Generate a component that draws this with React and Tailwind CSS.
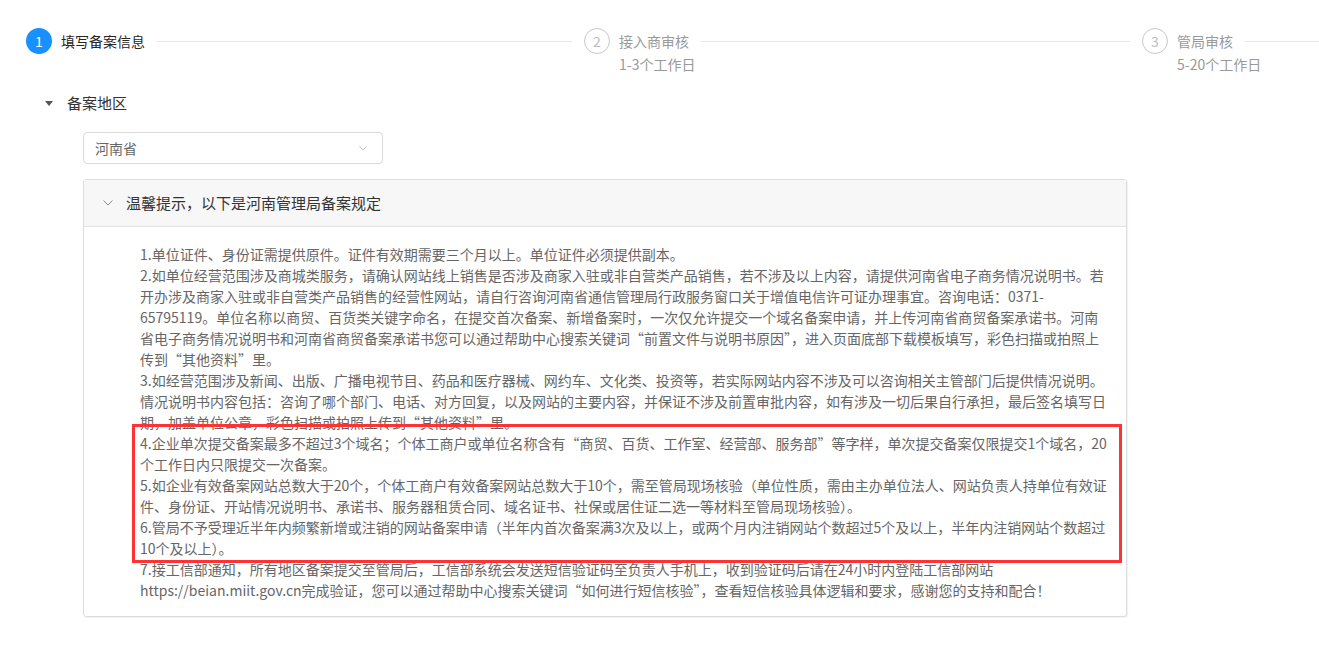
import React from "react";

const font = { fontFamily: '"Noto Sans CJK SC", "Noto Sans", sans-serif' };

function Step({ num, title, desc, active }) {
  return (
    <div className="w-[558px] shrink-0 flex items-start pr-3">
      <div
        className={
          active
            ? "w-[26px] h-[26px] rounded-full bg-[#1890ff] text-white text-[14px] flex items-center justify-center shrink-0"
            : "w-[26px] h-[26px] rounded-full border border-[#c8c8c8] text-[#bbbbbb] text-[14px] flex items-center justify-center shrink-0"
        }
      >
        {num}
      </div>
      <div className="ml-[9px] flex-1 min-w-0">
        <div className="flex items-center h-[26px]">
          <span className={active ? "text-[14px] text-[#262626] whitespace-nowrap" : "text-[14px] text-[#999999] whitespace-nowrap"}>
            {title}
          </span>
          <div className="flex-1 h-px bg-[#e6e6e6] ml-3" />
        </div>
        {desc && <div className="text-[14px] text-[#999999] leading-[20px] mt-0">{desc}</div>}
      </div>
    </div>
  );
}

export default function App() {
  return (
    <div className="w-full overflow-hidden bg-white min-h-[651px]" style={font}>
      <div className="flex pl-[26px] pt-[28px]">
        <Step num="1" title="填写备案信息" active />
        <Step num="2" title="接入商审核" desc="1-3个工作日" />
        <Step num="3" title="管局审核" desc="5-20个工作日" />
      </div>

      <div className="flex items-center mt-[18px] h-[22px] pl-[45px]">
        <div className="w-0 h-0 border-l-[4px] border-r-[4px] border-t-[5px] border-l-transparent border-r-transparent border-t-[#555]" />
        <span className="ml-[14px] text-[15px] text-[#333333]">备案地区</span>
      </div>

      <div className="ml-[83px] mt-[18px] w-[300px] h-[32px] border border-[#d9d9d9] rounded-[4px] flex items-center justify-between pl-[11px] pr-[15px]">
        <span className="text-[14px] text-[#666666]">河南省</span>
        <svg width="8" height="5" viewBox="0 0 8 5" fill="none">
          <path d="M0.4 0.4 L4 4.2 L7.6 0.4" stroke="#c0c0c0" strokeWidth="1" />
        </svg>
      </div>

      <div className="ml-[83px] mt-[15px] w-[1044px] border border-[#dddddd] rounded-[3px] shadow-[1px_1px_1px_rgba(0,0,0,0.06)]">
        <div className="h-[47px] bg-[#f7f7f7] border-b border-[#e3e3e3] flex items-center pl-[19px]">
          <svg width="10" height="6" viewBox="0 0 10 6" fill="none">
            <path d="M0.5 0.5 L5 5 L9.5 0.5" stroke="#888" strokeWidth="1" />
          </svg>
          <span className="ml-[13px] text-[15px] text-[#333333]">温馨提示，以下是河南管理局备案规定</span>
        </div>
        <div className="pl-[56px] pr-[16px] pt-[17px] pb-[15px] text-[14px] leading-[21px] text-[#666666]">
          <p>1.单位证件、身份证需提供原件。证件有效期需要三个月以上。单位证件必须提供副本。</p>
          <p>
            2.如单位经营范围涉及商城类服务，请确认网站线上销售是否涉及商家入驻或非自营类产品销售，若不涉及以上内容，请提供河南省电子商务情况说明书。若开办涉及商家入驻或非自营类产品销售的经营性网站，请自行咨询河南省通信管理局行政服务窗口关于增值电信许可证办理事宜。咨询电话：0371-65795119。单位名称以商贸、百货类关键字命名，在提交首次备案、新增备案时，一次仅允许提交一个域名备案申请，并上传河南省商贸备案承诺书。河南省电子商务情况说明书和河南省商贸备案承诺书您可以通过帮助中心搜索关键词“前置文件与说明书原因”，进入页面底部下载模板填写，彩色扫描或拍照上传到“其他资料”里。
          </p>
          <p>
            3.如经营范围涉及新闻、出版、广播电视节目、药品和医疗器械、网约车、文化类、投资等，若实际网站内容不涉及可以咨询相关主管部门后提供情况说明。情况说明书内容包括：咨询了哪个部门、电话、对方回复，以及网站的主要内容，并保证不涉及前置审批内容，如有涉及一切后果自行承担，最后签名填写日期，加盖单位公章，彩色扫描或拍照上传到“其他资料”里。
          </p>
          <div className="relative">
            <div className="absolute left-[-8px] top-[-9px] right-[-12px] bottom-[-4px] border-[3px] border-[#ff3333] pointer-events-none" />
            <p>
              4.企业单次提交备案最多不超过3个域名；个体工商户或单位名称含有“商贸、百货、工作室、经营部、服务部”等字样，单次提交备案仅限提交1个域名，20个工作日内只限提交一次备案。
            </p>
            <p>
              5.如企业有效备案网站总数大于20个，个体工商户有效备案网站总数大于10个，需至管局现场核验（单位性质，需由主办单位法人、网站负责人持单位有效证件、身份证、开站情况说明书、承诺书、服务器租赁合同、域名证书、社保或居住证二选一等材料至管局现场核验）。
            </p>
            <p>
              6.管局不予受理近半年内频繁新增或注销的网站备案申请（半年内首次备案满3次及以上，或两个月内注销网站个数超过5个及以上，半年内注销网站个数超过10个及以上）。
            </p>
          </div>
          <p>
            7.接工信部通知，所有地区备案提交至管局后，工信部系统会发送短信验证码至负责人手机上，收到验证码后请在24小时内登陆工信部网站https://beian.miit.gov.cn完成验证，您可以通过帮助中心搜索关键词“如何进行短信核验”，查看短信核验具体逻辑和要求，感谢您的支持和配合！
          </p>
        </div>
      </div>
    </div>
  );
}
